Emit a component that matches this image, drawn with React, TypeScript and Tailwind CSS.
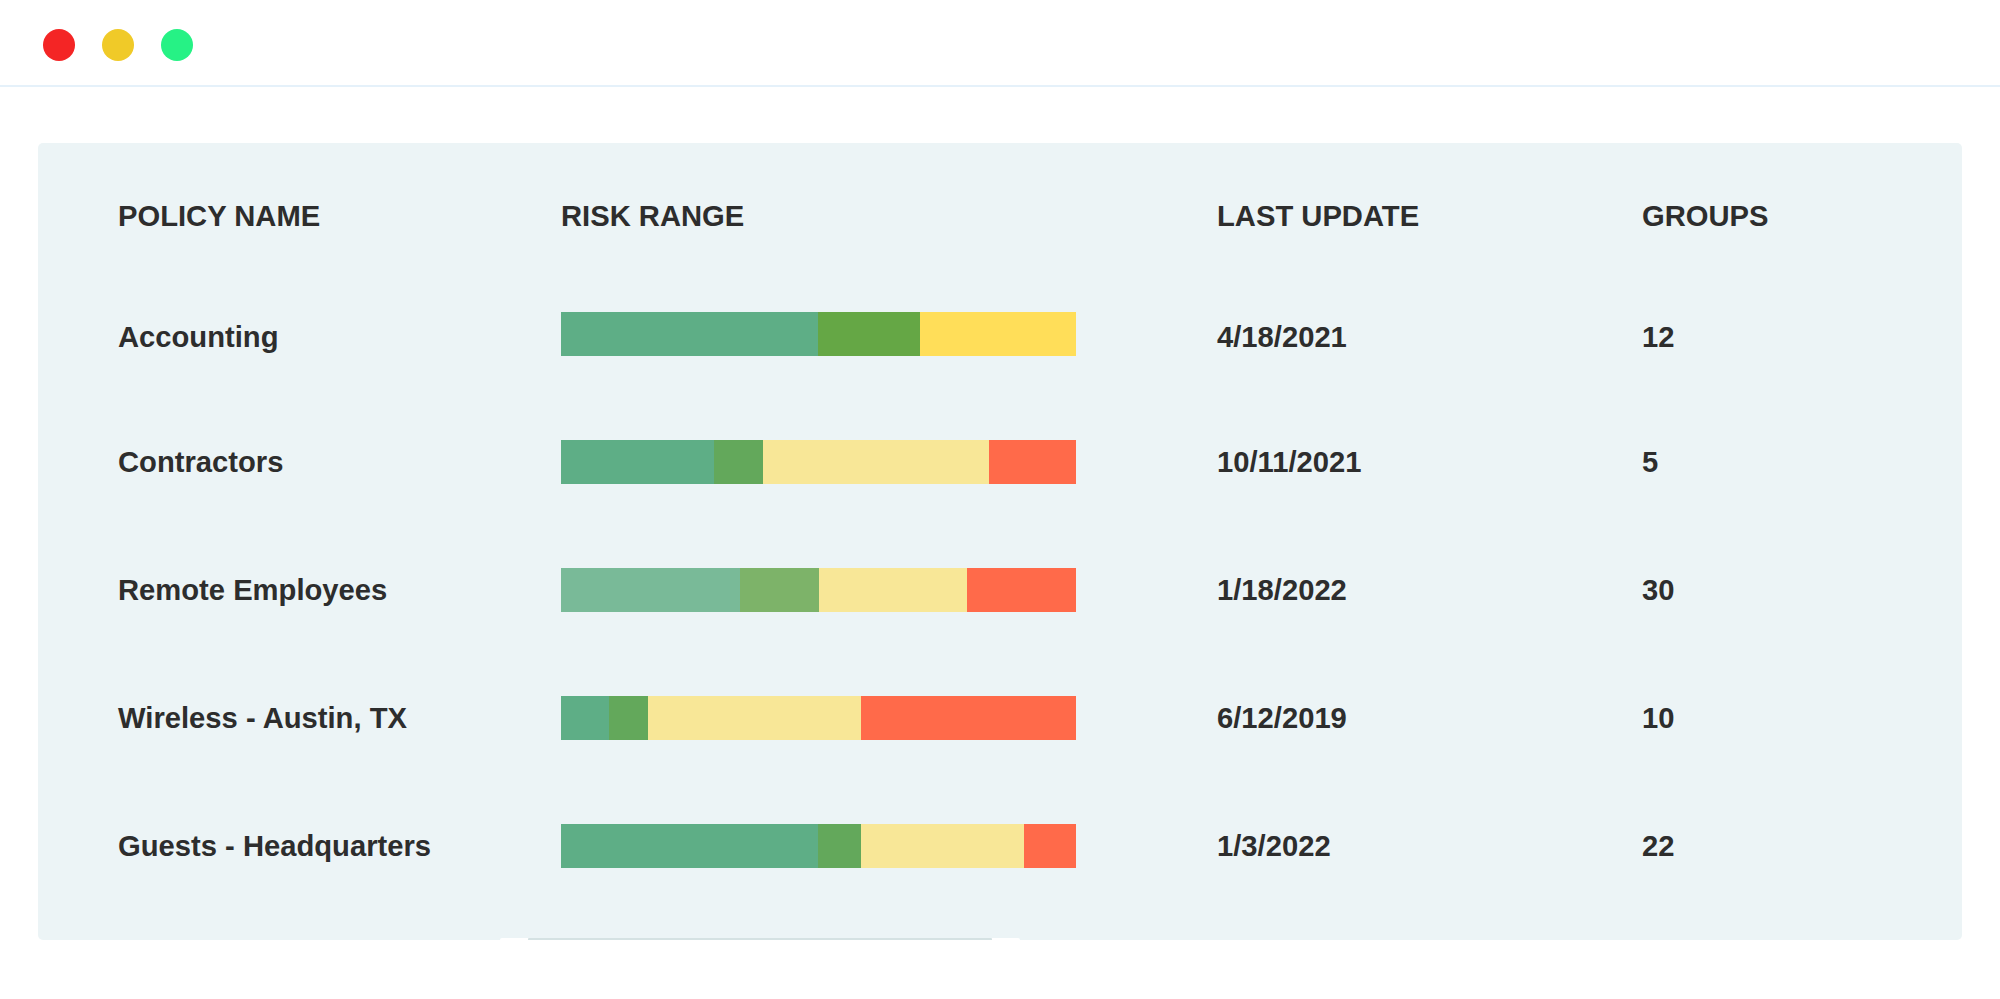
import React from "react";

type Seg = { w: number; c: string };
type Row = { name: string; date: string; groups: string; segs: Seg[]; shift?: boolean };

const rows: Row[] = [
  {
    name: "Accounting",
    date: "4/18/2021",
    groups: "12",
    shift: true,
    segs: [
      { w: 257, c: "#5eae86" },
      { w: 102, c: "#65a745" },
      { w: 156, c: "#ffde59" },
    ],
  },
  {
    name: "Contractors",
    date: "10/11/2021",
    groups: "5",
    segs: [
      { w: 153, c: "#5eae86" },
      { w: 49, c: "#63a85b" },
      { w: 226, c: "#f8e797" },
      { w: 87, c: "#ff6a4a" },
    ],
  },
  {
    name: "Remote Employees",
    date: "1/18/2022",
    groups: "30",
    segs: [
      { w: 179, c: "#79ba98" },
      { w: 79, c: "#7db369" },
      { w: 148, c: "#f8e797" },
      { w: 109, c: "#ff6a4a" },
    ],
  },
  {
    name: "Wireless - Austin, TX",
    date: "6/12/2019",
    groups: "10",
    segs: [
      { w: 48, c: "#5eae86" },
      { w: 39, c: "#63a85b" },
      { w: 213, c: "#f8e797" },
      { w: 215, c: "#ff6a4a" },
    ],
  },
  {
    name: "Guests - Headquarters",
    date: "1/3/2022",
    groups: "22",
    segs: [
      { w: 257, c: "#5eae86" },
      { w: 43, c: "#63a85b" },
      { w: 163, c: "#f8e797" },
      { w: 52, c: "#ff6a4a" },
    ],
  },
];

export default function App() {
  return (
    <div
      className="w-[2000px] h-[999px] bg-white text-[#2d2d2d] overflow-hidden"
      style={{ fontFamily: '"Liberation Sans", Arial, sans-serif' }}
    >
      {/* title bar */}
      <div className="h-[85px] flex items-start gap-[27px] pl-[43px] pt-[29px]">
        <div className="w-[32px] h-[32px] rounded-full bg-[#f42525]" />
        <div className="w-[32px] h-[32px] rounded-full bg-[#f0ca28]" />
        <div className="w-[32px] h-[32px] rounded-full bg-[#26f285]" />
      </div>
      <div className="h-[2px] bg-[#e5f1fa]" />

      <div className="px-[38px] pt-[56px]">
        <div className="relative h-[797px] rounded-[5px] bg-[#ecf4f6] pl-[80px] pt-[59px] pb-[30px]">
          <div className="grid grid-cols-[443px_656px_425px_1fr] text-[29.2px] leading-[29px] font-bold">
            <div>POLICY NAME</div>
            <div>RISK RANGE</div>
            <div>LAST UPDATE</div>
            <div>GROUPS</div>
          </div>
          <div className="mt-[39px] flex flex-col">
            {rows.map((r) => (
              <div
                key={r.name}
                className="h-[128px] grid grid-cols-[443px_656px_425px_1fr] items-center text-[29.2px] leading-[29px] font-bold"
              >
                <div className={r.shift ? "mt-[6px]" : ""}>{r.name}</div>
                <div className="flex h-[44px] w-[515px]">
                  {r.segs.map((s, i) => (
                    <div key={i} className="h-full" style={{ width: s.w, background: s.c }} />
                  ))}
                </div>
                <div className={r.shift ? "mt-[6px]" : ""}>{r.date}</div>
                <div className={r.shift ? "mt-[6px]" : ""}>{r.groups}</div>
              </div>
            ))}
          </div>
          {/* bottom edge artifact */}
          <div className="absolute bottom-0 left-[462px] w-[520px] h-[2px] bg-white rounded-t-[2px] flex justify-center">
            <div className="w-[464px] h-[2px] bg-[#d5e2e3] rounded-t-[1px]" />
          </div>
        </div>
      </div>
    </div>
  );
}
